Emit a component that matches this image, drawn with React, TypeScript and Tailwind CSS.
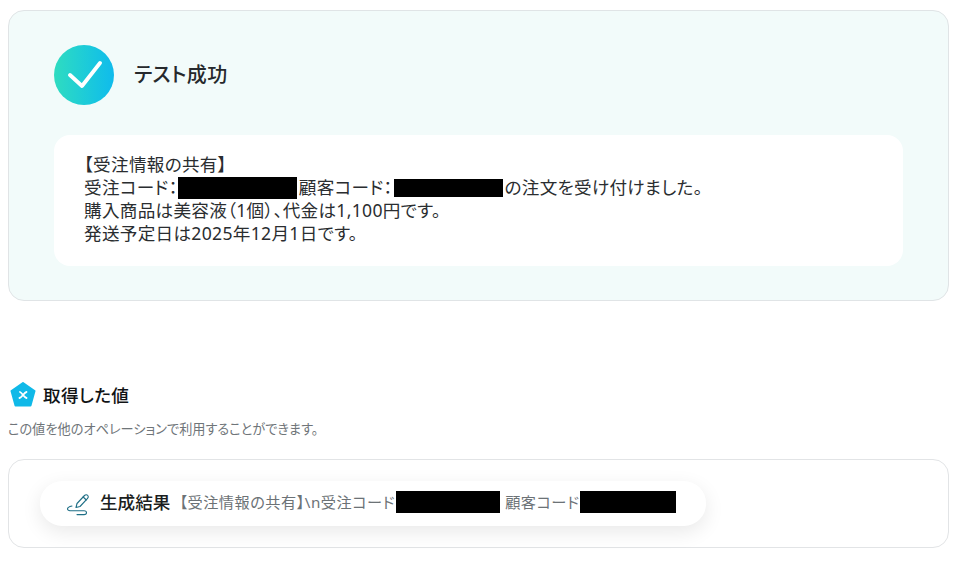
const sans = "font-['Noto_Sans','Noto_Sans_CJK_JP',sans-serif] [font-feature-settings:'palt']";

function Redact({ className }: { className: string }) {
  return <span className={`inline-block bg-black align-middle ${className}`} />;
}

export default function App() {
  return (
    <div className={`w-[968px] h-[566px] overflow-hidden bg-white pl-2 pr-[19px] pt-2.5 ${sans}`}>
      <section className="h-[291px] rounded-2xl border border-[#e0e4e6] bg-[#f2fbfa] pl-[45px] pr-[45px] pt-[34px]">
        <div className="flex items-center gap-5">
          <div className="flex h-[60px] w-[60px] items-center justify-center rounded-full bg-gradient-to-r from-[#2fdcc0] to-[#10bbec]">
            <svg width="36" height="30" viewBox="0 0 36 30" fill="none">
              <path d="M4 15 L16 26 L34 3" stroke="white" strokeWidth="3.8" strokeLinecap="round" strokeLinejoin="round" />
            </svg>
          </div>
          <h1 className="text-[20px] font-medium tracking-[0.4px] text-[#26292c]">テスト成功</h1>
        </div>
        <div className="mt-[30px] h-[131px] rounded-2xl bg-white px-[30px] pt-[18px] text-[17.6px] leading-[23px] tracking-[0.3px] text-[#2a2d30]">
          <p>【受注情報の共有】</p>
          <p className="flex items-center whitespace-nowrap">
            受注コード：
            <Redact className="h-[22px] w-[119px]" />
            <span className="ml-[2px]">顧客コード：</span>
            <Redact className="ml-[1px] h-[18px] w-[109px]" />
            <span className="ml-[2px]">の注文を受け付けました。</span>
          </p>
          <p>購入商品は美容液（1個）、代金は1,100円です。</p>
          <p>発送予定日は2025年12月1日です。</p>
        </div>
      </section>

      <div className="mt-[81px] flex items-center gap-[7px] pl-0.5">
        <svg width="26" height="25" viewBox="0 0 26 25">
          <path d="M13 1 L24.5 9 L20.5 23.5 L5.5 23.5 L1.5 9 Z" fill="#10b9e8" stroke="#10b9e8" strokeWidth="2" strokeLinejoin="round" />
          <path d="M10 10 C12 10.5 14 15.5 16.5 16 M16.5 10 C14 10.5 12 15.5 9.5 16" stroke="white" strokeWidth="1.8" strokeLinecap="round" fill="none" />
        </svg>
        <h2 className="text-[17.6px] font-medium leading-6 tracking-[0.35px] text-[#111315]">取得した値</h2>
      </div>
      <p className="mt-[12px] text-[13.2px] leading-[20px] text-[#6f7579]">この値を他のオペレーションで利用することができます。</p>

      <section className="mt-[20px] h-[89px] rounded-2xl border border-[#e2e4e6] bg-white pl-[31px] pt-[21px]">
        <div className="flex h-[45px] w-[666px] items-center rounded-[22px] bg-white pl-[26px] shadow-[0_6px_20px_rgba(0,0,0,0.09)]">
          <svg width="24" height="24" viewBox="0 0 24 24" fill="none" stroke="#1f6f86" strokeWidth="1.1" strokeLinecap="round" strokeLinejoin="round">
            <path d="M10 15.5 L11 11.5 L18.5 3.5 C19.5 2.5 21 2.5 21.8 3.5 C22.5 4.4 22.4 5.6 21.6 6.4 L14 14.5 Z" />
            <path d="M17.2 5 L20.3 8" />
            <path d="M6 14 C3.5 14.5 1.5 15.5 1.5 17 C1.5 18.5 3.5 18.8 6 18.8 L18 18.8 C20 18.8 20.5 19.8 20.5 20.8 C20.5 22 19.5 22.6 18 22.6 L11 22.6" />
          </svg>
          <span className="ml-[10px] mb-[2px] whitespace-nowrap text-[17.6px] font-medium text-[#1b1e20]">生成結果</span>
          <span className="ml-[9px] mb-[2px] flex items-center whitespace-nowrap text-[15.2px] tracking-[0.5px] text-[#6c7276]">
            【受注情報の共有】\n受注コード
            <Redact className="ml-[1px] h-[22px] w-[104px]" />
            <span className="ml-[5px]">顧客コード</span>
            <Redact className="ml-[1px] h-[22px] w-[96px]" />
          </span>
        </div>
      </section>
    </div>
  );
}
